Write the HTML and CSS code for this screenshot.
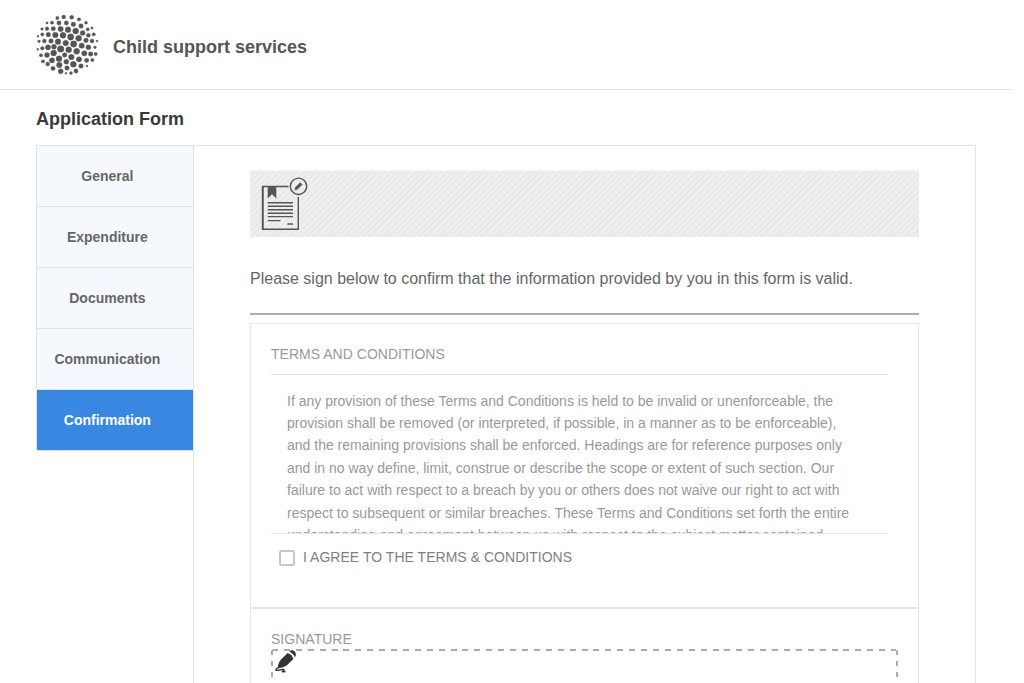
FILE: index.html
```html
<!DOCTYPE html>
<html lang="en">
<head>
<meta charset="utf-8">
<title>Child support services</title>
<link rel="stylesheet" href="styles.css">
</head>
<body>
<header class="header">
<svg class="logo" viewBox="0 0 228 216" aria-hidden="true"><circle cx="82" cy="30" r="5"/><circle cx="101" cy="27" r="6"/><circle cx="125" cy="28" r="6"/><circle cx="147" cy="34" r="5"/><circle cx="51" cy="45" r="3.5"/><circle cx="66" cy="44" r="5"/><circle cx="87" cy="45" r="6.5"/><circle cx="109" cy="45" r="6.5"/><circle cx="130" cy="49" r="7"/><circle cx="153" cy="54" r="7"/><circle cx="168" cy="44" r="4.5"/><circle cx="36" cy="63" r="4"/><circle cx="51" cy="62" r="5.5"/><circle cx="70" cy="62" r="6.5"/><circle cx="92" cy="63" r="8"/><circle cx="114" cy="65" r="8.5"/><circle cx="137" cy="69" r="9"/><circle cx="158" cy="75" r="7.5"/><circle cx="173" cy="64" r="5"/><circle cx="186" cy="60" r="3.5"/><circle cx="24" cy="85" r="3"/><circle cx="37" cy="79" r="5"/><circle cx="55" cy="80" r="7"/><circle cx="76" cy="81" r="8.5"/><circle cx="99" cy="82" r="9"/><circle cx="122" cy="87" r="9.5"/><circle cx="146" cy="91" r="9"/><circle cx="175" cy="82" r="6"/><circle cx="191" cy="79" r="5"/><circle cx="27" cy="100" r="4"/><circle cx="43" cy="99" r="6"/><circle cx="63" cy="99" r="7"/><circle cx="84" cy="101" r="8.5"/><circle cx="107" cy="105" r="8.5"/><circle cx="131" cy="108" r="9.5"/><circle cx="155" cy="113" r="8"/><circle cx="168" cy="97" r="7"/><circle cx="186" cy="99" r="6"/><circle cx="201" cy="99" r="3"/><circle cx="23" cy="124" r="3"/><circle cx="37" cy="121" r="5.5"/><circle cx="54" cy="118" r="8"/><circle cx="72" cy="116" r="7.5"/><circle cx="92" cy="123" r="10"/><circle cx="116" cy="125" r="9"/><circle cx="140" cy="130" r="9"/><circle cx="175" cy="118" r="7.5"/><circle cx="195" cy="118" r="4"/><circle cx="33" cy="142" r="5"/><circle cx="51" cy="141" r="7.5"/><circle cx="71" cy="135" r="9"/><circle cx="104" cy="141" r="7"/><circle cx="124" cy="147" r="8.5"/><circle cx="163" cy="136" r="8"/><circle cx="182" cy="138" r="7"/><circle cx="197" cy="138" r="5"/><circle cx="39" cy="160" r="5"/><circle cx="66" cy="157" r="8"/><circle cx="87" cy="152" r="9"/><circle cx="147" cy="154" r="8"/><circle cx="170" cy="157" r="6.5"/><circle cx="187" cy="156" r="5"/><circle cx="53" cy="168" r="6"/><circle cx="88" cy="171" r="8.5"/><circle cx="109" cy="161" r="7.5"/><circle cx="130" cy="169" r="9"/><circle cx="153" cy="174" r="7"/><circle cx="171" cy="174" r="3"/><circle cx="69" cy="181" r="6.5"/><circle cx="92" cy="190" r="7.5"/><circle cx="111" cy="180" r="7"/><circle cx="138" cy="189" r="6.5"/><circle cx="123" cy="195" r="4.5"/><circle cx="108" cy="196" r="3"/></svg>
<span class="brand">Child support services</span>
</header>
<main class="main">
<h1 class="title">Application Form</h1>
<div class="layout">
<nav class="tabs">
<a class="tab">General</a>
<a class="tab">Expenditure</a>
<a class="tab">Documents</a>
<a class="tab">Communication</a>
<a class="tab tab-active">Confirmation</a>
</nav>
<section class="panel">
<div class="banner">
<svg class="doc-icon" viewBox="0 0 80 80" fill="none" stroke="#555" stroke-width="1.4" aria-hidden="true">
<path d="M43.5 21.5H17.7V64.3H53.3V32"/><path d="M17.7 21V65" stroke-width="1.8"/>
<path d="M22.7 21h8.6v12.5L27 29.3 22.7 33.5z" fill="#555" stroke="none"/>
<path d="M22.7 37.8H48M22.7 41.3H48M22.7 44.7H48M22.7 48.2H48M22.7 51.6H48M22.7 55.6h12.8M42.3 59h5.7"/>
<circle cx="53.5" cy="21.3" r="8.2"/>
<path d="M49.8 25l.9-2.8 4.6-4.5 1.8 1.8-4.6 4.6z" fill="#555" stroke="#555" stroke-width=".7"/>
</svg>
</div>
<p class="lead">Please sign below to confirm that the information provided by you in this form is valid.</p>
<div class="card">
<h2 class="label">TERMS AND CONDITIONS</h2>
<div class="terms">If any provision of these Terms and Conditions is held to be invalid or unenforceable, the<br>provision shall be removed (or interpreted, if possible, in a manner as to be enforceable),<br>and the remaining provisions shall be enforced. Headings are for reference purposes only<br>and in no way define, limit, construe or describe the scope or extent of such section. Our<br>failure to act with respect to a breach by you or others does not waive our right to act with<br>respect to subsequent or similar breaches. These Terms and Conditions set forth the entire<br>understanding and agreement between us with respect to the subject matter contained</div>
<label class="agree"><span class="box"></span>I AGREE TO THE TERMS &amp; CONDITIONS</label>
</div>
<div class="card sign">
<h2 class="label sign-label">SIGNATURE</h2>
<div class="pad">
<svg class="pen" viewBox="0 0 24 24" fill="#333" aria-hidden="true"><path d="M13.6 2.9Q18 4.3 19.4 9L12.6 15.4Q9.5 17.6 4.7 18.2L3.7 17.5Q4.5 12 7 9.4z"/><path d="M15.3 1.4Q17.8-.6 20.5 1.3 23 4 20.9 7.3 19.4 3.2 15.3 1.4z"/><path d="M4.5 17.6C2.5 18.4 1 20 2.4 20.3 4.5 20.6 8.5 18.6 9.9 19.6 10.9 20.7 7.5 20.9 8.5 21.7 9.1 22.1 10 21.5 11.5 21.7" fill="none" stroke="#333" stroke-width="1.4"/></svg>
</div>
</div>
</section>
</div>
</main>
</body>
</html>
```
FILE: styles.css
```css
* { box-sizing: border-box; }
html { overflow: hidden; }
body { margin: 0; width: 1012px; height: 683px; overflow: hidden; background: #fff; font-family: "Liberation Sans", Arial, sans-serif; }
.header { display: flex; align-items: center; height: 90px; padding: 0 30px 2px; border-bottom: 1px solid #e3e3e3; }
.logo { width: 76px; height: 72px; fill: #555; stroke: #555; stroke-width: 1; }
.brand { margin: 7px 0 0 7px; font-size: 18px; font-weight: bold; color: #555; }
.main { padding: 0 36px; }
.title { margin: 0; padding-top: 18px; height: 55px; font-size: 18px; line-height: 22px; color: #3a3a3a; }
.layout { display: flex; align-items: flex-start; }
.tabs { width: 157px; border: 1px solid #e2e4e6; border-right: 0; }
.tab { display: block; height: 61px; padding-right: 15.3px; border-bottom: 1px solid #e2e4e6; background: #f5f9fe; color: #666; font-size: 14px; font-weight: bold; line-height: 60px; text-align: center; }
.tab-active { height: 60px; border-bottom: 0; background: #3887e1; color: #fff; }
.panel { flex: 1; height: 538px; padding: 24px 56px 0; overflow: hidden; border: 1px solid #e3e3e3; border-bottom: 0; }
.banner { height: 67px; border-top: 1px solid #f4f4f4; background: repeating-linear-gradient(135deg, #efefef 0 2.4px, #e8e8e8 2.4px 4.4px); }
.doc-icon { display: block; width: 80px; height: 80px; margin: -6px 0 0 -5px; }
.banner { display: flow-root; }
.lead { margin: 0; padding-top: 32px; height: 78px; border-bottom: 2px solid #abacb4; color: #666; font-size: 16px; line-height: 20px; white-space: nowrap; }
.card { height: 285px; margin-top: 8px; padding: 20px 30px 0 20px; border: 1px solid #e4e6e8; }
.label { margin: 0; height: 31px; border-bottom: 1px solid #e5e5e5; color: #999; font-size: 14px; font-weight: normal; line-height: 21px; letter-spacing: .02px; }
.terms { height: 159px; padding: 14.6px 0 0 16px; overflow: hidden; border-bottom: 1px solid #e5e5e5; color: #999; font-size: 14px; line-height: 22.4px; white-space: nowrap; }
.agree { display: flex; align-items: center; gap: 8px; padding: 14px 0 0 8px; color: #808080; font-size: 14px; line-height: 18px; letter-spacing: .03px; }
.box { width: 16px; height: 16px; margin-top: 2px; border: 2px solid #c6c7ce; border-radius: 2px; }
.sign { margin-top: -1px; padding-right: 20px; border-top: 2px solid #e2e6ea; }
.sign-label { height: 20px; border: 0; }
/* Dashed frame with custom dash and gap lengths */
.pad {
  height: 150px;
  padding: 1px 0 0 3px;
  border-radius: 3px;
  background:
    repeating-linear-gradient(90deg, #aaaab1 0 6px, transparent 6px 11.906px) 1px 0 / 624px 2px no-repeat,
    repeating-linear-gradient(180deg, #aaaab1 0 5px, transparent 5px 11px) 0 1px / 2px 100% no-repeat,
    repeating-linear-gradient(180deg, #aaaab1 0 5px, transparent 5px 11px) 100% 1px / 2px 100% no-repeat;
}
.pen { display: block; width: 24px; height: 24px; overflow: visible; }
```
